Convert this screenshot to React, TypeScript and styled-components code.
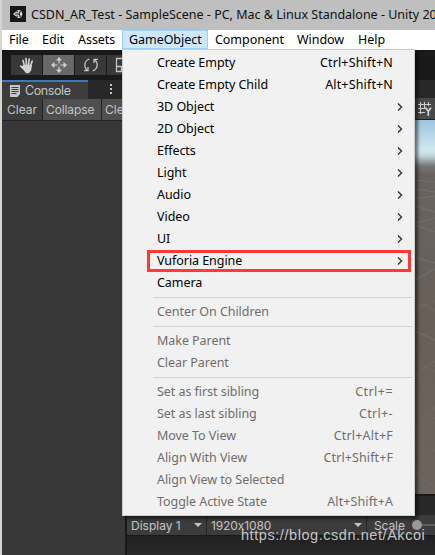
import React from 'react';
import styled, { createGlobalStyle } from 'styled-components';

const GlobalStyle = createGlobalStyle`
  * { box-sizing: border-box; }
  body { margin: 0; overflow: hidden; }
`;

const uiFont = `'Noto Sans', 'Liberation Sans', sans-serif`;
const editorFont = `Inter, 'Liberation Sans', sans-serif`;

const Screen = styled.div`
  position: relative;
  width: 435px;
  height: 555px;
  overflow: hidden;
  border-left: 2px solid #d8d4cf;
  background: #191919;
  display: flex;
  flex-direction: column;
  white-space: nowrap;
  font-family: ${uiFont};
`;

const TitleBar = styled.header`
  flex: 0 0 30px;
  display: flex;
  align-items: center;
  gap: 5px;
  padding: 0 0 2px 8px;
  background: #bfbfbf;
  color: #111;
  font-size: 12.5px;

  svg { flex: none; }
`;

const Label = styled.span<{ $spacing?: number }>`
  letter-spacing: ${(p) => p.$spacing ?? 0}px;
  white-space: pre;
`;

const MenuBar = styled.nav`
  flex: 0 0 20px;
  display: flex;
  background: #fff;
  color: #000;
  font-size: 12.5px;
  letter-spacing: -0.05px;
`;

const MenuBarItem = styled.div<{ $width: number; $active?: boolean }>`
  flex: 0 0 ${(p) => p.$width}px;
  height: 19px;
  line-height: 17px;
  padding-left: 6px;
  border: 1px solid ${(p) => (p.$active ? '#99d1ff' : 'transparent')};
  background: ${(p) => (p.$active ? '#cce8ff' : 'transparent')};
`;

const ToolBar = styled.div`
  flex: 0 0 30px;
  display: flex;
  align-items: flex-start;
  gap: 1px;
  padding: 5px 0 0 9px;
  background: #191919;
`;

const ToolButton = styled.div<{ $active?: boolean }>`
  width: 31px;
  height: 20px;
  display: flex;
  align-items: center;
  justify-content: center;
  background: ${(p) => (p.$active ? '#686868' : '#383838')};
`;

const Workspace = styled.main`
  flex: 1;
  display: flex;
  min-height: 0;
  color: #c4c4c4;
  font-family: ${editorFont};
`;

const ConsolePanel = styled.section`
  flex: 0 0 123px;
  min-width: 0;
  display: flex;
  flex-direction: column;
  background: #383838;
`;

const TabStrip = styled.div`
  flex: 0 0 19px;
  display: flex;
  background: #282828;
`;

const ConsoleTab = styled.div`
  width: 86px;
  display: flex;
  align-items: center;
  gap: 5px;
  padding-left: 8px;
  border-top: 2px solid #3a79bb;
  background: #3c3c3c;
  font-size: 12.5px;
  letter-spacing: -0.4px;
`;

const Kebab = styled.div`
  width: 3px;
  margin: 4px 0 0 22px;
  display: grid;
  gap: 2px;
  align-content: start;
`;

const KebabDot = styled.i`
  width: 2px;
  height: 2px;
  background: #c4c4c4;
`;

const ConsoleTools = styled.div`
  flex: 0 0 21px;
  display: flex;
  border-bottom: 1px solid #232323;
  background: #3c3c3c;
`;

const ConsoleTool = styled.div<{ $width: number; $toggled?: boolean }>`
  flex: 0 0 ${(p) => p.$width}px;
  padding-left: ${(p) => (p.$toggled ? 3 : 5)}px;
  border-right: 1px solid #232323;
  background: ${(p) => (p.$toggled ? '#4f4f4f' : '#3c3c3c')};
  font-size: 12px;
  line-height: 21px;
`;

const ViewPanel = styled.section`
  flex: 1;
  min-width: 0;
  display: flex;
  flex-direction: column;
  border-left: 2px solid #191919;
`;

const ViewTab = styled.div<{ $height: number }>`
  flex: 0 0 ${(p) => p.$height}px;
  background: #282828;
`;

const SceneTools = styled.div`
  flex: 0 0 22px;
  display: flex;
  align-items: center;
  justify-content: flex-end;
  padding-right: 3px;
  border-bottom: 1px solid #202020;
  background: #484848;
`;

const SceneCanvas = styled.div`
  flex: 0 0 376px;
  border-bottom: 2px solid #191919;
  display: flex;
  justify-content: flex-end;
  background: linear-gradient(#9fc3df 0, #cfe9ef 30px, #c2d6d8 36px, #777574 46px, #696260 54px, #686058 200px, #6c635d 372px);
`;

const GameTools = styled.div`
  flex: 0 0 20px;
  display: flex;
  background: #3c3c3c;
  font-size: 12px;
  line-height: 19px;
`;

const Picker = styled.div<{ $width: number }>`
  flex: 0 0 ${(p) => p.$width}px;
  display: flex;
  justify-content: space-between;
  align-items: center;
  padding: 0 4px 0 4px;
  border-right: 1px solid #232323;
`;

const Caret = styled.i`
  border: 4px solid transparent;
  border-top: 4px solid #c4c4c4;
  border-bottom: 0;
`;

const ScaleControl = styled.div`
  display: flex;
  align-items: center;
  gap: 7px;
  padding-left: 7px;
`;

const SliderTrack = styled.div`
  width: 24px;
  height: 2px;
  display: flex;
  align-items: center;
  background: #5e5e5e;
`;

const SliderThumb = styled.i`
  width: 10px;
  height: 10px;
  flex: none;
  border-radius: 50%;
  background: #999;
`;

const GameCanvas = styled.div`
  flex: 1;
  border-top: 1px solid #191919;
  background: linear-gradient(#202020, #2a2a2a);
`;

const Dropdown = styled.div`
  position: absolute;
  left: 120px;
  top: 49px;
  width: 293px;
  height: 467px;
  padding: 2px;
  border: 1px solid #ccc;
  background: #f1f1f1;
  box-shadow: 3px 3px 3px rgba(0, 0, 0, 0.5);
  font-size: 12.5px;
`;

const MenuRow = styled.div<{ $disabled?: boolean }>`
  height: 22px;
  display: flex;
  align-items: center;
  justify-content: space-between;
  padding: 0 19px 1px 32px;
  color: ${(p) => (p.$disabled ? '#6d6d6d' : '#000')};
`;

const Arrow = styled.svg`
  width: 6px;
  height: 8px;
  margin-right: -10px;
  fill: none;
  stroke: #333;
  stroke-width: 1.4;
`;

const Separator = styled.div`
  height: 7px;
  margin-left: 28px;
  padding-top: 3px;

  &::after {
    content: '';
    display: block;
    height: 1px;
    background: #d4d4d4;
  }
`;

const Highlight = styled.div`
  position: absolute;
  left: 145px;
  top: 250px;
  width: 264px;
  height: 22px;
  border: 3px solid #ff3838;
`;

const Watermark = styled.div`
  position: absolute;
  left: 239px;
  top: 526px;
  color: rgba(225, 225, 225, 0.85);
  font: 14.5px/19px 'Liberation Sans', sans-serif;
  letter-spacing: 0.56px;
`;

type Entry = { text: string; keys?: string; keySpacing?: number; sub?: boolean; off?: boolean };

const groups: Entry[][] = [
  [
    { text: 'Create Empty', keys: 'Ctrl+Shift+N', keySpacing: 0.15 },
    { text: 'Create Empty Child', keys: 'Alt+Shift+N', keySpacing: 0.15 },
    { text: '3D Object', sub: true },
    { text: '2D Object', sub: true },
    { text: 'Effects', sub: true },
    { text: 'Light', sub: true },
    { text: 'Audio', sub: true },
    { text: 'Video', sub: true },
    { text: 'UI', sub: true },
    { text: 'Vuforia Engine', sub: true },
    { text: 'Camera' },
  ],
  [{ text: 'Center On Children', off: true }],
  [
    { text: 'Make Parent', off: true },
    { text: 'Clear Parent', off: true },
  ],
  [
    { text: 'Set as first sibling', keys: 'Ctrl+=', keySpacing: 0.45, off: true },
    { text: 'Set as last sibling', keys: 'Ctrl+-', keySpacing: 0.35, off: true },
    { text: 'Move To View', keys: 'Ctrl+Alt+F', keySpacing: 0.2, off: true },
    { text: 'Align With View', keys: 'Ctrl+Shift+F', keySpacing: 0.1, off: true },
    { text: 'Align View to Selected', off: true },
    { text: 'Toggle Active State', keys: 'Alt+Shift+A', keySpacing: 0.1, off: true },
  ],
];

const UnityLogo = () => (
  <svg width="16" height="16" viewBox="0 0 16 16">
    <rect width="16" height="16" fill="#171717" />
    <path d="M3 8 8 4l3 .5L12.500 8 11 11.500 8 12Z" fill="#d9d9d9" />
    <path d="M5 8h4M9 8l1.500-3M9 8l1.500 3M6.500 6l1.500-.5M6.500 10l1.500.5" stroke="#222" strokeWidth="1.200" />
  </svg>
);

const HandIcon = () => (
  <svg width="16" height="17" viewBox="0 0 16 17" fill="none" stroke="#d2d2d2" strokeLinecap="round">
    <path d="M5.500 9 4 3.500M7.500 8 7 1.500M9.500 8l.7-6M11.500 9l1.700-5" strokeWidth="1.700" />
    <path d="M5 8.500h7.200l-.7 4.500-2 2.500H7.500L5 12.500 1.500 9" fill="#d2d2d2" strokeWidth="1.500" strokeLinejoin="round" />
  </svg>
);

const MoveIcon = () => (
  <svg width="16" height="16" viewBox="0 0 16 16" fill="#d2d2d2">
    <path d="M8 0l3 3.500H5zM8 16l3-3.500H5zM0 8l3.500-3v6zM16 8l-3.500-3v6z" />
    <path d="M8 3v3.500M8 9.500V13M3 8h3.500M9.500 8H13" stroke="#d2d2d2" strokeWidth="1.200" />
  </svg>
);

const RotateIcon = () => (
  <svg width="16" height="16" viewBox="0 0 16 16" fill="none" stroke="#c4c4c4" strokeWidth="1.300">
    <path d="M6.500 2C1.500 3.500 0 9.500 4.500 13.500M1 13.700h4V10M9.500 14C14.500 12.500 16 6.500 11.500 2.500M15 2.300h-4V6" />
  </svg>
);

const ScaleIcon = () => (
  <svg width="16" height="16" viewBox="0 0 16 16" fill="none" stroke="#c4c4c4" strokeWidth="1.300">
    <path d="M1.500 1.500h13v13h-13zM1.500 9.500h5v5M8.500 7.500l4-4M9 3.500h3.500V7" />
  </svg>
);

const ConsoleIcon = () => (
  <svg width="10" height="12" viewBox="0 0 10 12">
    <path d="M0 0h10v9L7.500 12H0z" fill="#c9c9c9" />
    <path d="M1.500 2.500h7M1.500 4.500h7M1.500 6.500h7M1.500 8.500h5" stroke="#3c3c3c" />
  </svg>
);

const GridIcon = () => (
  <svg width="14" height="15" viewBox="0 0 14 15" fill="none" stroke="#cfcfcf">
    <path d="M2.500 1v12M6.500 1v7M10.500 1v4M0 3.500h13M0 7.500h7M0 11.500h7" />
    <path d="M7.500 6.500l2.800 4 2.700-4M10.300 10.500V15" strokeWidth="1.700" />
  </svg>
);

const GroundGrid = () => (
  <svg width="20" height="372" viewBox="0 0 20 372" fill="none" stroke="#8a8580" strokeOpacity=".55" strokeWidth=".8">
    <path d="M0 60l20 2M0 69l20 3M0 79l20-3M0 86l20 6M0 103l20-5M0 105l20 7M0 137l20 6M0 160l20-11M0 211l20 9" />
    <path d="M0 182l20 8M0 190l20-9M0 240l20 12M0 255l20-14M0 284l20 15M0 310l20-22M0 325l20-23M0 270l20 18M0 350l20-20M0 352l20 15" strokeOpacity=".3" />
  </svg>
);

export default function App() {
  return (
    <>
      <GlobalStyle />
      <Screen>
        <TitleBar>
          <UnityLogo />
          <Label>CSDN_AR_Test - SampleScene - PC, Mac &amp; Linux Standalone - Unity 20</Label>
        </TitleBar>
        <MenuBar>
          <MenuBarItem $width={33}>File</MenuBarItem>
          <MenuBarItem $width={36}>Edit</MenuBarItem>
          <MenuBarItem $width={51}>Assets</MenuBarItem>
          <MenuBarItem $width={86} $active>GameObject</MenuBarItem>
          <MenuBarItem $width={82}>Component</MenuBarItem>
          <MenuBarItem $width={61}>Window</MenuBarItem>
          <MenuBarItem $width={42}>Help</MenuBarItem>
        </MenuBar>
        <ToolBar>
          <ToolButton><HandIcon /></ToolButton>
          <ToolButton $active><MoveIcon /></ToolButton>
          <ToolButton><RotateIcon /></ToolButton>
          <ToolButton><ScaleIcon /></ToolButton>
        </ToolBar>
        <Workspace>
          <ConsolePanel>
            <TabStrip>
              <ConsoleTab><ConsoleIcon />Console</ConsoleTab>
              <Kebab><KebabDot /><KebabDot /><KebabDot /></Kebab>
            </TabStrip>
            <ConsoleTools>
              <ConsoleTool $width={41}>Clear</ConsoleTool>
              <ConsoleTool $width={59} $toggled><Label $spacing={-0.1}>Collapse</Label></ConsoleTool>
              <ConsoleTool $width={23} $toggled>Cle</ConsoleTool>
            </ConsoleTools>
          </ConsolePanel>
          <ViewPanel>
            <ViewTab $height={18} />
            <SceneTools><GridIcon /></SceneTools>
            <SceneCanvas><GroundGrid /></SceneCanvas>
            <ViewTab $height={19} />
            <GameTools>
              <Picker $width={80}><Label>Display 1</Label><Caret /></Picker>
              <Picker $width={160}><Label $spacing={-0.1}>1920x1080</Label><Caret /></Picker>
              <ScaleControl><Label $spacing={-0.1}>Scale</Label><SliderTrack><SliderThumb /></SliderTrack></ScaleControl>
            </GameTools>
            <GameCanvas />
          </ViewPanel>
        </Workspace>
        <Dropdown>
          {groups.map((group, index) => (
            <React.Fragment key={index}>
              {index > 0 && <Separator />}
              {group.map((entry) => (
                <MenuRow key={entry.text} $disabled={entry.off}>
                  <Label $spacing={-0.05}>{entry.text}</Label>
                  {entry.keys && <Label $spacing={entry.keySpacing}>{entry.keys}</Label>}
                  {entry.sub && <Arrow viewBox="0 0 6 8"><path d="M1 .5 4.500 4 1 7.500" /></Arrow>}
                </MenuRow>
              ))}
            </React.Fragment>
          ))}
        </Dropdown>
        <Highlight />
        <Watermark>https://blog.csdn.net/Akcoi</Watermark>
      </Screen>
    </>
  );
}
